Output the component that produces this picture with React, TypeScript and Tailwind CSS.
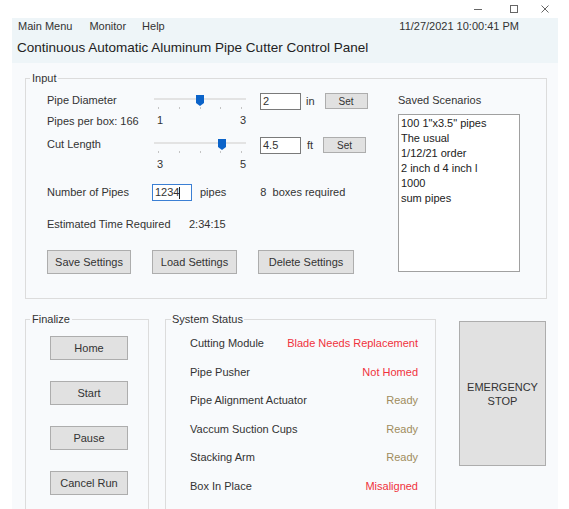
import React from "react";

function Slider({ frac, min, max }: { frac: number; min: string; max: string }) {
  const ticks = [0, 1, 2, 3, 4];
  return (
    <div className="w-[92px] flex flex-col">
      <div className="relative h-[14px]">
        <div className="absolute left-0 right-0 top-[6px] h-[2px] bg-[#e3e3e3]" />
        <svg
          className="absolute top-[3px]"
          style={{ left: frac * 92 - 4 }}
          width="8"
          height="11"
          viewBox="0 0 8 11"
        >
          <path d="M0 0 H8 V8 L4 11 L0 8 Z" fill="#0b63c9" />
        </svg>
      </div>
      <div className="flex justify-between px-[4px] mt-[1px] h-[2px]">
        {ticks.map((t) => (
          <div key={t} className="w-[1px] h-[2px] bg-[#c4c4c4]" />
        ))}
      </div>
      <div className="flex justify-between pl-[3px] pr-0 mt-[5px] leading-[13px] text-[11px]">
        <span>{min}</span>
        <span>{max}</span>
      </div>
    </div>
  );
}

function Btn({ children, className }: { children: React.ReactNode; className: string }) {
  return (
    <div
      className={
        "flex shrink-0 items-center justify-center bg-[#e1e1e1] border border-[#adadad] text-[#333] " + className
      }
    >
      {children}
    </div>
  );
}

function Status({ label, value, color }: { label: string; value: string; color: string }) {
  return (
    <div className="h-[28.6px] flex items-center justify-between">
      <span>{label}</span>
      <span className={color}>{value}</span>
    </div>
  );
}

export default function App() {
  return (
    <div className="w-[569px] h-[509px] overflow-hidden bg-white text-[11px] text-[#333] font-['Liberation_Sans',Arial,sans-serif]">
      {/* window controls */}
      <div className="h-[18px] flex items-center justify-end pr-[19px] text-[#666]">
        <svg width="10" height="10" viewBox="0 0 10 10">
          <path d="M1 5.5 H9" stroke="#666" strokeWidth="1" />
        </svg>
        <svg className="ml-[26px]" width="10" height="10" viewBox="0 0 10 10">
          <rect x="1.5" y="1.5" width="7" height="7" fill="none" stroke="#666" strokeWidth="1" />
        </svg>
        <svg className="ml-[21px]" width="10" height="10" viewBox="0 0 10 10">
          <path d="M1.5 1.5 L8.5 8.5 M8.5 1.5 L1.5 8.5" stroke="#666" strokeWidth="1" />
        </svg>
      </div>

      <div className="ml-[12px] w-[546px] h-[491px] overflow-hidden bg-[#f8fafc]">
        {/* header band */}
        <div className="h-[45px] bg-[#eef5f8] flex flex-col">
          <div className="flex items-center h-[17px] pl-[6px] pr-[39px]">
            <span>Main Menu</span>
            <span className="ml-[17px]">Monitor</span>
            <span className="ml-[16px]">Help</span>
            <span className="ml-auto">11/27/2021 10:00:41 PM</span>
          </div>
          <div className="pl-[5px] mt-[3px] text-[13.5px] leading-[20px] text-[#222]">
            Continuous Automatic Aluminum Pipe Cutter Control Panel
          </div>
        </div>

        {/* Input group */}
        <fieldset className="ml-[13px] mt-[8px] w-[522px] border border-[#dcdcdc] pl-[21px] pb-[24px] pt-[7px]">
          <legend className="ml-[-17px] px-[2px] leading-[14px]">Input</legend>
          <div className="flex">
            <div className="w-[351px] flex flex-col">
              {/* Pipe diameter block */}
              <div className="flex h-[44px]">
                <div className="w-[107px] flex flex-col">
                  <div className="leading-[17px]">Pipe Diameter</div>
                  <div className="leading-[17px] mt-[4px]">Pipes per box: 166</div>
                </div>
                <Slider frac={0.5} min="1" max="3" />
                <div className="ml-[14px] mt-[1px] flex items-start">
                  <div className="w-[41px] h-[17px] border border-[#7a7a7a] bg-white pl-[2px] leading-[15px]">2</div>
                  <span className="ml-[5px] leading-[17px]">in</span>
                  <Btn className="ml-[10px] w-[43px] h-[16px] text-[10px]">Set</Btn>
                </div>
              </div>
              {/* Cut length block */}
              <div className="flex h-[48px]">
                <div className="w-[107px] flex flex-col">
                  <div className="leading-[17px]">Cut Length</div>
                </div>
                <Slider frac={0.74} min="3" max="5" />
                <div className="ml-[14px] mt-[1px] flex items-start">
                  <div className="w-[41px] h-[17px] border border-[#7a7a7a] bg-white pl-[2px] leading-[15px]">4.5</div>
                  <span className="ml-[6px] leading-[17px]">ft</span>
                  <Btn className="ml-[10px] w-[43px] h-[16px] text-[10px]">Set</Btn>
                </div>
              </div>
              {/* number of pipes */}
              <div className="flex h-[17px] items-center">
                <span className="w-[105px]">Number of Pipes</span>
                <div className="w-[40px] h-[17px] border border-[#3b7fd4] bg-white pl-[2px] leading-[15px] flex items-center">
                  <span>1234</span>
                  <span className="w-[1px] h-[12px] bg-[#222]" />
                </div>
                <span className="ml-[8px]">pipes</span>
                <span className="ml-[34px]">8&nbsp; boxes required</span>
              </div>
              <div className="flex mt-[15px] leading-[17px]">
                <span className="w-[142px]">Estimated Time Required</span>
                <span>2:34:15</span>
              </div>
              <div className="flex mt-[17px] gap-[21px]">
                <Btn className="w-[84px] h-[24px]">Save Settings</Btn>
                <Btn className="w-[85px] h-[24px]">Load Settings</Btn>
                <Btn className="w-[96px] h-[24px]">Delete Settings</Btn>
              </div>
            </div>
            <div className="flex flex-col">
              <div className="leading-[17px]">Saved Scenarios</div>
              <div className="mt-[5px] w-[122px] h-[158px] border border-[#a0a0a0] bg-white pl-[2px] pt-[1px] leading-[15px] text-[#222]">
                <div>100 1"x3.5" pipes</div>
                <div>The usual</div>
                <div>1/12/21 order</div>
                <div>2 inch d 4 inch l</div>
                <div>1000</div>
                <div>sum pipes</div>
              </div>
            </div>
          </div>
        </fieldset>

        {/* bottom groups */}
        <div className="flex mt-[13px] ml-[13px] items-start">
          <fieldset className="w-[124px] h-[210px] shrink-0 border border-[#dcdcdc] pl-[24px] pt-[10px]">
            <legend className="ml-[-20px] px-[2px] leading-[14px]">Finalize</legend>
            <div className="flex flex-col gap-[21px]">
              <Btn className="w-[78px] h-[24px]">Home</Btn>
              <Btn className="w-[78px] h-[24px]">Start</Btn>
              <Btn className="w-[78px] h-[24px]">Pause</Btn>
              <Btn className="w-[78px] h-[24px]">Cancel Run</Btn>
            </div>
          </fieldset>
          <fieldset className="ml-[16px] w-[271px] h-[210px] shrink-0 border border-[#dcdcdc] pl-[24px] pr-[17px] pt-[3px]">
            <legend className="ml-[-19px] px-[1px] leading-[14px]">System Status</legend>
            <div className="flex flex-col">
              <Status label="Cutting Module" value="Blade Needs Replacement" color="text-[#f0323c]" />
              <Status label="Pipe Pusher" value="Not Homed" color="text-[#f0323c]" />
              <Status label="Pipe Alignment Actuator" value="Ready" color="text-[#a08c5c]" />
              <Status label="Vaccum Suction Cups" value="Ready" color="text-[#a08c5c]" />
              <Status label="Stacking Arm" value="Ready" color="text-[#a08c5c]" />
              <Status label="Box In Place" value="Misaligned" color="text-[#f0323c]" />
            </div>
          </fieldset>
          <Btn className="ml-[23px] mt-[9px] w-[87px] h-[145px] text-center leading-[14px]">
            <span>
              EMERGENCY
              <br />
              STOP
            </span>
          </Btn>
        </div>
      </div>
    </div>
  );
}
